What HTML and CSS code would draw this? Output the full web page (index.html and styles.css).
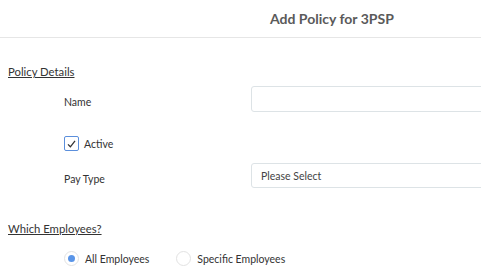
FILE: index.html
```html
<!DOCTYPE html>
<html lang="en">
<head>
    <meta charset="UTF-8">
    <title>Add Policy for 3PSP</title>
    <link rel="stylesheet" href="styles.css">
</head>
<body>

<div class="modal">
    <div class="modal-header">
        <h1 class="modal-title">Add Policy for 3PSP</h1>
    </div>
    <div class="modal-body">
        <p class="section-title">Policy Details</p>
        <div class="form-row row-name">
            <label class="field-label">Name</label>
            <input type="text" class="field-input">
        </div>
        <div class="form-row row-active">
            <label class="check">
                <span class="check-box">
                    <svg viewBox="0 0 14 14" width="14" height="14"><path d="M3.2 7.4 L5.8 10 L10.8 3.6" fill="none" stroke="#333" stroke-width="1.4"/></svg>
                </span>
                Active
            </label>
        </div>
        <div class="form-row row-pay">
            <label class="field-label">Pay Type</label>
            <div class="field-input select">Please Select</div>
        </div>
        <p class="section-title second">Which Employees?</p>
        <div class="radio-row">
            <label class="radio"><span class="radio-dot checked"></span>All Employees</label>
            <label class="radio"><span class="radio-dot"></span>Specific Employees</label>
        </div>
    </div>
</div>

</body>
</html>
```

FILE: styles.css
```css
body {
    margin: 0;
    font-family: 'Lato', 'Liberation Sans', sans-serif;
    color: #333;
    background: #fff;
}
.modal {
    width: 481px;
    overflow: hidden;
}
.modal-header {
    height: 37px;
    border-bottom: 1px solid #e6e6e6;
    display: flex;
    align-items: center;
    padding-left: 270px;
}
.modal-title {
    margin: 0;
    font-size: 14px;
    font-weight: 700;
    color: #5a5a5a;
}
.modal-body {
    padding: 0 8px;
}
.section-title {
    margin: 27px 0 0;
    font-size: 11.3px;
    line-height: 14px;
    text-decoration: underline;
    color: #333;
}
.section-title.second {
    margin-top: 34px;
}
.form-row {
    display: flex;
    align-items: center;
    padding-left: 56px;
    font-size: 10.5px;
}
.field-label {
    width: 187px;
    flex-shrink: 0;
    padding-top: 6px;
}
.field-input {
    box-sizing: border-box;
    width: 260px;
    height: 26px;
    border: 1px solid #dde3e6;
    border-radius: 3px;
    font-family: inherit;
    font-size: 10.5px;
    color: #444;
    outline: none;
    padding: 0 9px;
    flex-shrink: 0;
}
.row-name {
    margin-top: 7px;
}
.select {
    display: flex;
    align-items: center;
    height: 25px;
}
.row-active {
    margin-top: 24px;
}
.row-pay {
    margin-top: 12px;
}
.check {
    display: flex;
    align-items: center;
    gap: 5px;
}
.check-box {
    box-sizing: border-box;
    width: 15px;
    height: 15px;
    border: 1px solid #5b8fdc;
    border-radius: 2px;
    display: flex;
    align-items: center;
    justify-content: center;
}
.radio-row {
    display: flex;
    padding-left: 56px;
    margin-top: 15px;
    font-size: 10.5px;
    gap: 27px;
}
.radio {
    display: flex;
    align-items: center;
    gap: 6px;
}
.radio-dot {
    box-sizing: border-box;
    width: 15px;
    height: 15px;
    border: 1px solid #e2e2e2;
    border-radius: 50%;
    display: flex;
    align-items: center;
    justify-content: center;
}
.radio-dot.checked::after {
    content: "";
    width: 7px;
    height: 7px;
    border-radius: 50%;
    background: #5a95e8;
}
```
